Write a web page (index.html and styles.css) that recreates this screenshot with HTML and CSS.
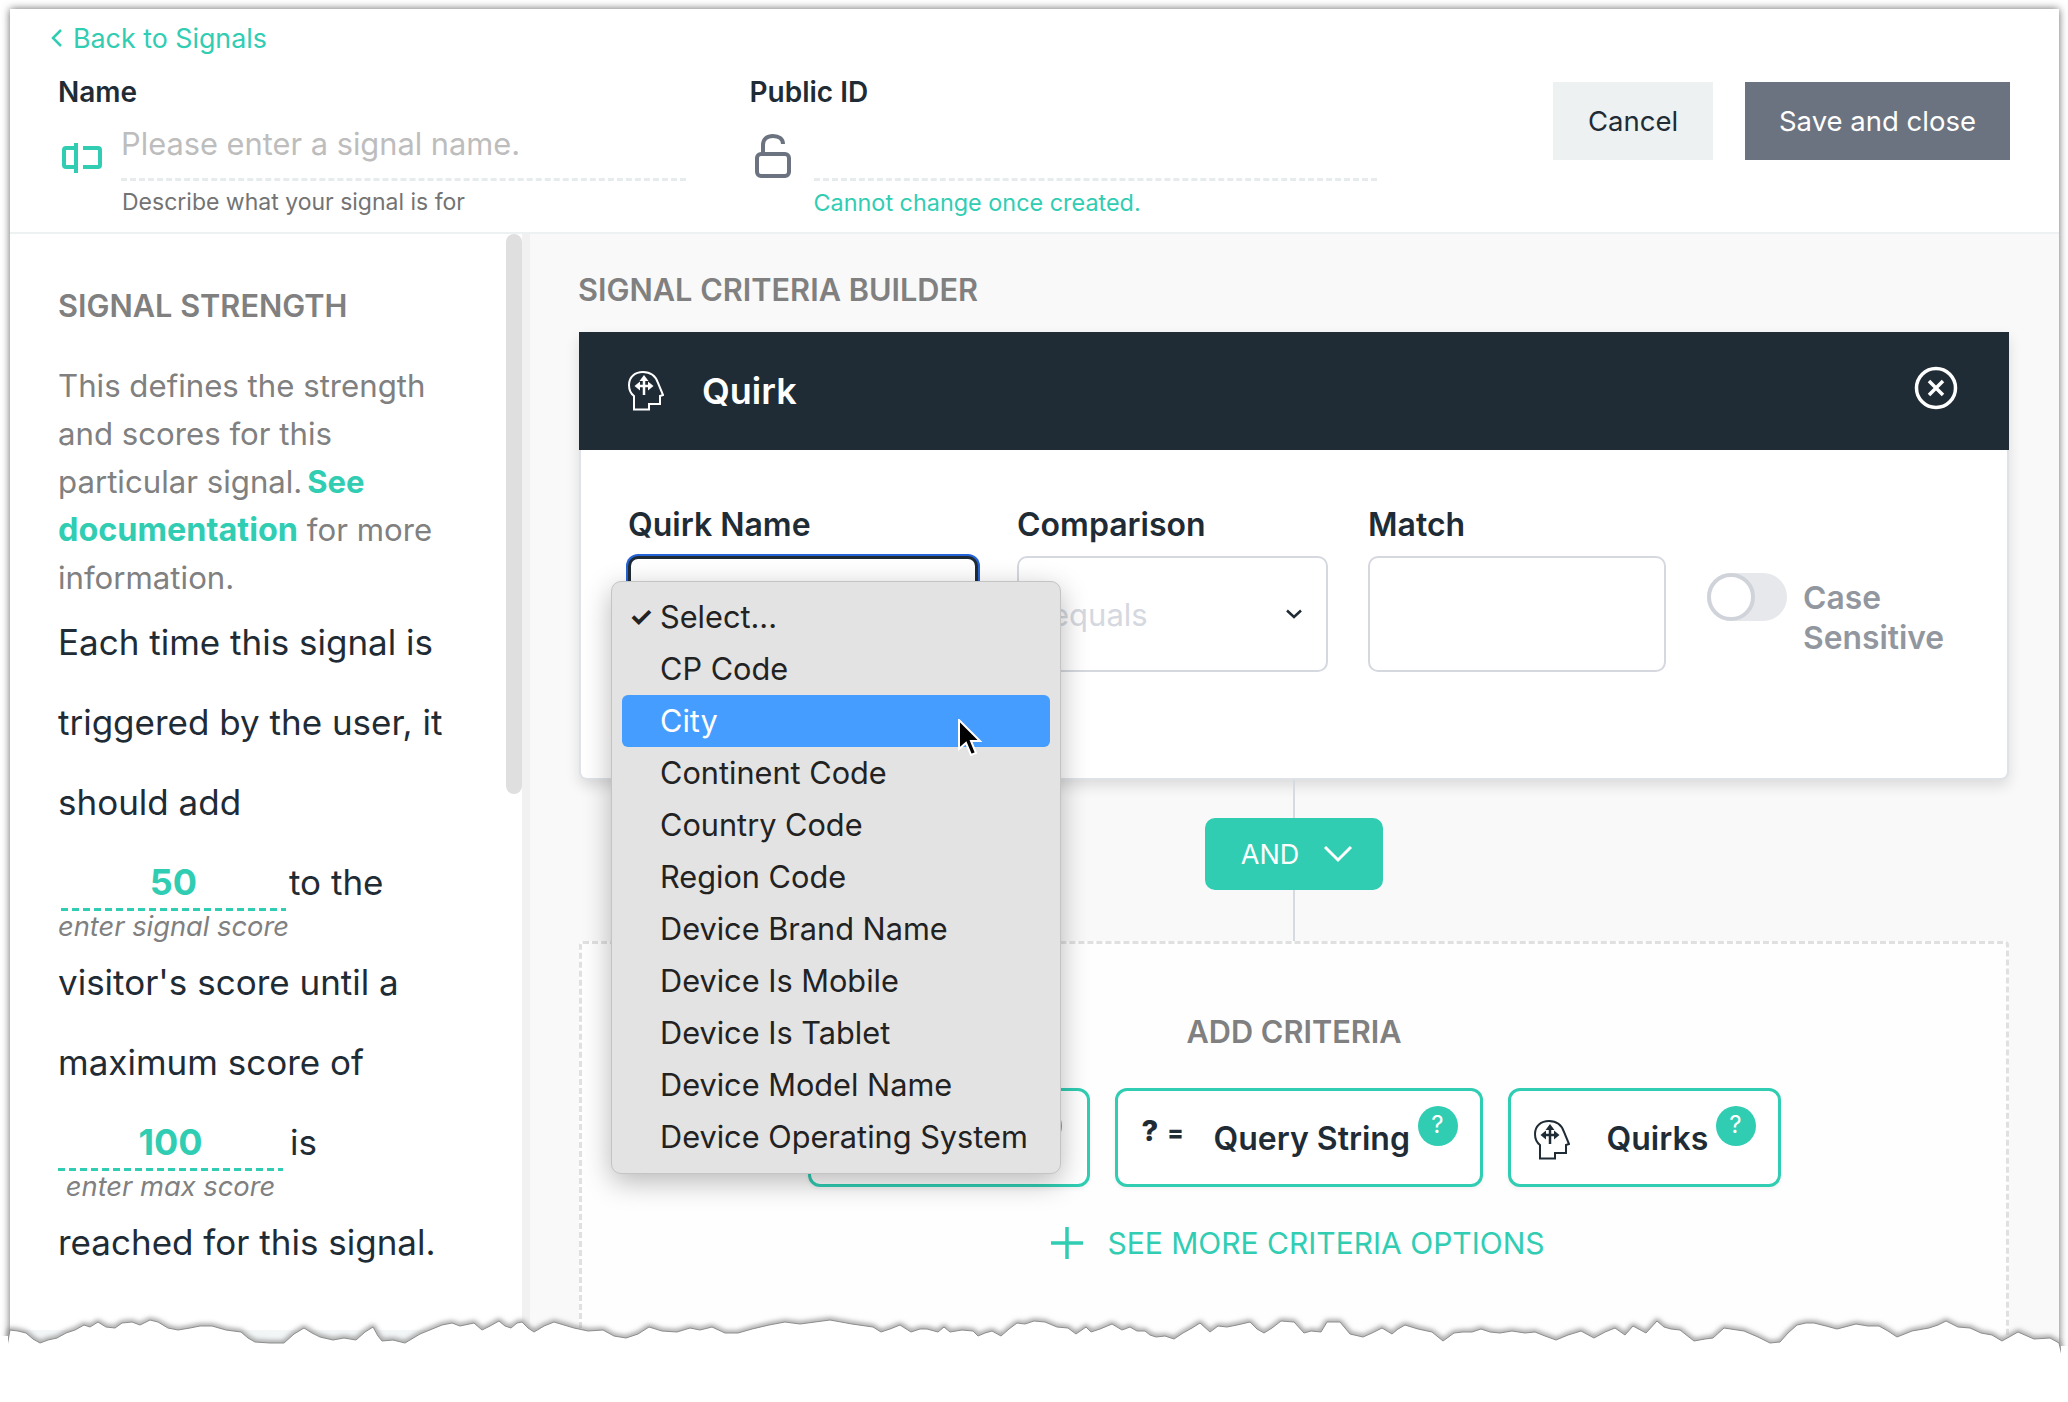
FILE: index.html
```html
<!DOCTYPE html>
<html lang="en">
<head>
    <meta charset="UTF-8" />
    <title>Signal editor</title>
    <link rel="stylesheet" href="styles.css">
</head>
<body>

    <svg class="defs" width="0" height="0">
        <symbol id="head" viewBox="0 0 36 40">
            <path d="M6 38.500V25C2 22 1 18 1 14 1 6 7 1 15 1c8 0 13 5 15 11l5 12-3 1v8H21v5.500z" fill="none" stroke="currentColor" stroke-width="2" />
            <path d="M16 9v15M11 15h10" fill="none" stroke="currentColor" stroke-width="2.500" />
            <path d="M16 4l4.500 6h-9zM6.500 15l5.500-4.500v9zM25.500 15 20 10.500v9z" fill="currentColor" />
        </symbol>
    </svg>

    <div class="window">
        <header class="top">
            <a class="back"><svg width="12" height="20" viewBox="0 0 12 20"><path d="M10 2 2 10l8 8" fill="none" stroke="#30cdb3" stroke-width="2.500" /></svg>Back to Signals</a>
            <div class="top-row">
                <div class="top-field">
                    <label class="top-label">Name</label>
                    <div class="top-input">
                        <svg class="name-icon" width="40" height="32" viewBox="0 0 40 32"><path d="M14 1v30M14 6H4a2 2 0 0 0-2 2v15a2 2 0 0 0 2 2h10M21 6h15a2 2 0 0 1 2 2v15a2 2 0 0 1-2 2H21" fill="none" stroke="#30cdb3" stroke-width="4" /></svg>
                        <div class="line-input placeholder">Please enter a signal name.</div>
                    </div>
                    <div class="hint">Describe what your signal is for</div>
                </div>
                <div class="top-field">
                    <label class="top-label">Public ID</label>
                    <div class="top-input">
                        <svg class="lock-icon" width="38" height="44" viewBox="0 0 38 44"><path d="M9 20V11C9 5 13 2 19 2s10 3 10 8" fill="none" stroke="#6c7380" stroke-width="4" /><rect x="3" y="20" width="32" height="22" rx="4" fill="none" stroke="#6c7380" stroke-width="4" /></svg>
                        <div class="line-input"></div>
                    </div>
                    <div class="hint hint-teal">Cannot change once created.</div>
                </div>
                <div class="top-buttons">
                    <button class="btn btn-cancel">Cancel</button>
                    <button class="btn btn-save">Save and close</button>
                </div>
            </div>
        </header>

        <div class="content">
            <aside class="side">
                <h2 class="side-title">SIGNAL STRENGTH</h2>
                <p class="side-intro">This defines the strength and scores for this particular signal. <a class="doc-link doc-see">See</a> <a class="doc-link">documentation</a> for more information.</p>
                <div class="side-line">Each time this signal is</div>
                <div class="side-line">triggered by the user, it</div>
                <div class="side-line">should add</div>
                <div class="score-row">
                    <div class="score score-one">
                        <div class="score-value">50</div>
                        <div class="score-label">enter signal score</div>
                    </div>
                    <span class="side-line">to the</span>
                </div>
                <div class="side-line">visitor's score until a</div>
                <div class="side-line">maximum score of</div>
                <div class="score-row">
                    <div class="score">
                        <div class="score-value">100</div>
                        <div class="score-label">enter max score</div>
                    </div>
                    <span class="side-line score-is">is</span>
                </div>
                <div class="side-line">reached for this signal.</div>
                <div class="scroll-thumb"></div>
            </aside>

            <main class="builder">
                <h2 class="builder-title">SIGNAL CRITERIA BUILDER</h2>
                <section class="panel">
                    <div class="panel-head">
                        <svg class="panel-icon" width="36" height="40"><use href="#head" /></svg>
                        <span class="panel-name">Quirk</span>
                        <svg class="panel-close" width="44" height="44" viewBox="0 0 44 44"><circle cx="22" cy="22" r="19.500" fill="none" stroke="#fff" stroke-width="3.500" /><path d="M15 15l14 14M29 15 15 29" stroke="#fff" stroke-width="3.500" /></svg>
                    </div>
                    <div class="panel-body">
                        <div class="field field-quirk">
                            <label>Quirk Name</label>
                            <div class="box box-focus"></div>
                        </div>
                        <div class="field field-comp">
                            <label>Comparison</label>
                            <div class="box box-select">
                                <span>equals</span>
                                <svg width="18" height="10" viewBox="0 0 18 10"><path d="M2 1.500 9 8l7-6.500" fill="none" stroke="#1f2c36" stroke-width="2.500" /></svg>
                            </div>
                        </div>
                        <div class="field field-match">
                            <label>Match</label>
                            <div class="box"></div>
                        </div>
                        <div class="case">
                            <div class="toggle"><div class="knob"></div></div>
                            <div class="case-label">Case<br>Sensitive</div>
                        </div>
                    </div>
                </section>

                <div class="connector">
                    <button class="and-btn">AND<svg width="30" height="18" viewBox="0 0 30 18"><path d="M2 2l13 13L28 2" fill="none" stroke="#fff" stroke-width="3" /></svg></button>
                </div>

                <section class="add-box">
                    <h3 class="add-title">ADD CRITERIA</h3>
                    <div class="cards">
                        <div class="card card-hidden"><span class="help">?</span></div>
                        <div class="card card-query">
                            <span class="query-icon">?<span class="query-eq">=</span></span>
                            <span class="card-name">Query String</span>
                            <span class="help">?</span>
                        </div>
                        <div class="card card-quirks">
                            <svg class="quirks-icon" width="36" height="40"><use href="#head" /></svg>
                            <span class="card-name">Quirks</span>
                            <span class="help">?</span>
                        </div>
                    </div>
                    <a class="see-more"><svg width="32" height="32" viewBox="0 0 32 32"><path d="M16 0v32M0 16h32" stroke="#30cdb3" stroke-width="3.500" /></svg>SEE MORE CRITERIA OPTIONS</a>
                </section>
            </main>
        </div>

        <!-- native select popup -->
        <ul class="menu">
            <li class="checked">Select...</li>
            <li>CP Code</li>
            <li class="active">City</li>
            <li>Continent Code</li>
            <li>Country Code</li>
            <li>Region Code</li>
            <li>Device Brand Name</li>
            <li>Device Is Mobile</li>
            <li>Device Is Tablet</li>
            <li>Device Model Name</li>
            <li>Device Operating System</li>
        </ul>
        <svg class="cursor" width="26" height="38" viewBox="0 0 26 38"><path d="M2 1v29l7-6 5 12 5-2-5-12h9z" fill="#000" stroke="#fff" stroke-width="2" /></svg>
    </div>

    <!-- torn bottom edge -->
    <svg class="torn" width="2068" height="102" viewBox="0 1300 2068 102">
        <defs>
            <filter id="blur" x="-1%" y="-50%" width="102%" height="200%"><feGaussianBlur stdDeviation="2.500" /></filter>
            <polygon id="edge" points="-20,1420 -20,1352 6,1352 10,1330 18,1331 26,1333 33,1339 40,1343 48,1340 57,1338 66,1333 75,1330 84,1325 90,1327 98,1322 106,1327 115,1328 122,1323 132,1322 140,1325 150,1320 158,1322 168,1328 178,1330 190,1328 200,1326 212,1326 226,1330 241,1332 248,1338 255,1342 270,1343 284,1343 294,1334 304,1328 312,1333 320,1337 333,1340 344,1338 356,1340 365,1332 373,1327 378,1336 382,1341 393,1340 405,1343 420,1334 442,1325 452,1323 460,1326 474,1323 482,1330 490,1326 499,1321 505,1326 511,1328 517,1323 522,1322 528,1328 534,1332 544,1326 554,1322 564,1325 574,1328 588,1331 603,1330 614,1336 626,1338 638,1334 649,1327 662,1331 677,1332 690,1328 700,1330 712,1327 725,1333 738,1333 752,1329 769,1325 785,1322 800,1324 815,1322 830,1320 852,1324 873,1327 881,1332 890,1329 900,1325 911,1332 920,1329 927,1329 938,1332 944,1327 950,1332 962,1330 973,1331 978,1336 985,1333 992,1331 1001,1336 1009,1329 1017,1323 1025,1324 1034,1321 1045,1322 1057,1327 1068,1328 1076,1334 1086,1327 1091,1332 1100,1329 1112,1324 1122,1330 1130,1327 1137,1331 1145,1331 1150,1335 1156,1337 1165,1336 1174,1339 1183,1333 1192,1328 1200,1323 1210,1332 1218,1326 1227,1327 1237,1325 1250,1322 1257,1329 1264,1333 1272,1328 1281,1321 1294,1322 1304,1333 1311,1331 1321,1332 1327,1322 1340,1322 1350,1334 1363,1337 1372,1333 1382,1328 1392,1334 1398,1329 1405,1325 1418,1329 1432,1332 1443,1341 1454,1333 1463,1332 1472,1332 1481,1329 1490,1332 1500,1333 1512,1331 1525,1333 1535,1332 1545,1336 1556,1340 1568,1335 1581,1331 1594,1338 1605,1332 1615,1328 1625,1335 1633,1326 1646,1333 1657,1321 1664,1327 1671,1329 1680,1330 1694,1341 1705,1339 1713,1338 1724,1328 1744,1331 1758,1337 1770,1343 1780,1342 1788,1333 1797,1325 1806,1323 1814,1323 1826,1326 1837,1329 1856,1324 1868,1326 1879,1326 1888,1331 1897,1337 1912,1331 1929,1328 1938,1325 1946,1321 1958,1327 1970,1328 1981,1333 1992,1335 2002,1341 2018,1332 2034,1339 2050,1338 2059,1343 2063,1360 2090,1360 2090,1420" />
        </defs>
        <use href="#edge" class="torn-shadow" filter="url(#blur)" />
        <use href="#edge" class="torn-paper" />
        <rect class="torn-side" x="0" y="1336" width="8" height="66" />
        <rect class="torn-side" x="2061" y="1346" width="7" height="56" />
    </svg>

</body>
</html>
```

FILE: styles.css
```css
* {
    box-sizing: border-box;
}
body {
    margin: 0;
    height: 1402px;
    overflow: hidden;
    position: relative;
    background-color: #fff;
    font-family: "Inter", sans-serif;
    color: #1f2c36;
}
.defs {
    position: absolute;
}
.window {
    position: relative;
    margin: 9px 0 0 10px;
    width: 2049px;
    height: 1340px;
    background-color: #fff;
    box-shadow: 0 0 8px rgba(0,0,0,0.6);
    overflow: hidden;
}

/* top bar */
.top {
    height: 225px;
    padding: 12px 49px 0;
    border-bottom: 2px solid #edf1f1;
}
.back {
    display: flex;
    align-items: center;
    gap: 10px;
    margin-left: -8px;
    height: 34px;
    color: #30cdb3;
    font-size: 26.800px;
}
.top-row {
    display: flex;
    gap: 65px;
}
.top-field {
    width: 627px;
    padding-top: 20px;
}
.top-label {
    display: block;
    height: 34px;
    margin-left: -1px;
    line-height: 34px;
    font-size: 28px;
    font-weight: 600;
}
.top-input {
    display: flex;
    height: 72px;
    align-items: flex-end;
}
.name-icon {
    margin: 0 19px 7px 3px;
    flex: none;
}
.lock-icon {
    margin: 0 22px 3px 3px;
    flex: none;
}
.line-input {
    flex: 1;
    height: 56px;
    line-height: 38px;
    border-bottom: 3px dashed #e6ecec;
    font-size: 30.800px;
}
.placeholder {
    color: #bdbdbd;
}
.hint {
    margin-left: 63px;
    height: 41px;
    line-height: 43px;
    font-size: 23px;
    color: #737373;
}
.hint-teal {
    color: #30cdb3;
    font-size: 23.400px;
}
.top-buttons {
    display: flex;
    gap: 32px;
    margin: 27px 0 0 111px;
}
.btn {
    height: 78px;
    border: none;
    font-family: inherit;
    font-size: 27.500px;
}
.btn-cancel {
    width: 160px;
    background-color: #edf1f1;
    color: #1f2c36;
}
.btn-save {
    width: 265px;
    background-color: #6c7380;
    color: #fff;
}

/* sidebar */
.content {
    display: flex;
    height: 1115px;
}
.side {
    position: relative;
    flex: none;
    width: 520px;
    padding: 0 48px;
    background: linear-gradient(#fff 1096px, #f3f6f7 0);
    border-right: 8px solid #f1f1f1;
}
.side-title {
    margin: 52px 0 36px;
    height: 40px;
    line-height: 40px;
    font-size: 30.700px;
    font-weight: 600;
    color: #808080;
}
.side-intro {
    margin: 0;
    width: 410px;
    line-height: 48px;
    font-size: 31.200px;
    color: #808080;
}
.doc-link {
    color: #30cdb3;
    font-weight: 700;
    font-size: 32.400px;
}
.doc-see {
    margin-left: -4px;
    font-size: 31px;
}
.side-line {
    display: block;
    line-height: 80px;
    font-size: 35px;
    white-space: nowrap;
}
.score-row {
    display: flex;
    height: 100px;
    gap: 3px;
}
.score {
    width: 225px;
}
.score-one {
    margin-left: 3px;
}
.score-is {
    margin-left: 4px;
}
.score-value {
    height: 69px;
    padding-top: 20px;
    background: repeating-linear-gradient(90deg, #30cdb3 0 7px, transparent 7px 11px) bottom / 100% 3px no-repeat;
    text-align: center;
    line-height: 40px;
    font-size: 36px;
    font-weight: 700;
    color: #30cdb3;
}
.score-label {
    margin: 0 -5px;
    line-height: 32px;
    text-align: center;
    font-size: 27.300px;
    font-style: italic;
    color: #808080;
    white-space: nowrap;
}
.scroll-thumb {
    position: absolute;
    top: 0;
    right: 0;
    width: 16px;
    height: 560px;
    border-radius: 8px;
    background-color: #dfdfdf;
}

/* builder */
.builder {
    flex: 1;
    padding: 36px 50px 0 49px;
    background-color: #f9f9f9;
}
.builder-title {
    margin: 0 0 22px -1px;
    height: 40px;
    line-height: 40px;
    font-size: 30.700px;
    font-weight: 600;
    color: #808080;
}
.panel {
    height: 448px;
    background-color: #fff;
    border-radius: 0 0 8px 8px;
    border: 2px solid #dfe3e7;
    border-top: none;
    box-shadow: 0 6px 14px rgba(0,0,0,0.12);
}
.panel-head {
    display: flex;
    align-items: center;
    height: 118px;
    margin: 0 -2px;
    padding: 0 51px 6px 49px;
    background-color: #1f2c36;
    color: #fff;
}
.panel-icon {
    margin-top: 6px;
}
.panel-name {
    margin: 6px 0 0 38px;
    font-size: 36px;
    font-weight: 600;
}
.panel-close {
    margin-left: auto;
}
.panel-body {
    display: flex;
    padding: 53px 0 0 47px;
}
.field label {
    display: block;
    height: 42px;
    line-height: 44px;
    font-size: 32px;
    font-weight: 600;
}
.field-quirk {
    width: 389px;
}
.field-comp {
    width: 351px;
}
.field-match {
    width: 298px;
}
.box {
    height: 116px;
    margin-top: 11px;
    border: 2px solid #d5d8df;
    border-radius: 10px;
    background-color: #fff;
}
.field-quirk .box {
    width: 350px;
}
.field-comp .box {
    width: 311px;
}
.box-focus {
    border: 3px solid #1f2c36;
    box-shadow: 0 0 0 2px #2563d8;
}
.box-select {
    display: flex;
    align-items: center;
    justify-content: space-between;
    padding: 0 23px 0 32px;
    font-size: 31px;
    color: #d5d8df;
}
.case {
    display: flex;
    margin: 70px 0 0 41px;
    gap: 16px;
}
.toggle {
    width: 80px;
    height: 48px;
    border-radius: 24px;
    background-color: #e7e8ec;
}
.knob {
    width: 48px;
    height: 48px;
    border: 4px solid #d0d4da;
    border-radius: 50%;
    background-color: #fff;
}
.case-label {
    line-height: 40px;
    margin-top: 5px;
    font-size: 31.800px;
    font-weight: 600;
    color: #92979f;
}

.connector {
    display: flex;
    justify-content: center;
    align-items: center;
    height: 161px;
    padding-bottom: 13px;
    background: linear-gradient(#d5dbe0, #d5dbe0) center / 2px 100% no-repeat;
}
.and-btn {
    display: flex;
    align-items: center;
    justify-content: center;
    gap: 24px;
    width: 178px;
    height: 72px;
    padding-left: 12px;
    border: none;
    border-radius: 10px;
    background-color: #30cdb3;
    color: #fff;
    font-family: inherit;
    font-size: 27px;
}
.add-box {
    height: 500px;
    border: 3px dashed #e0e0e0;
    border-radius: 4px;
    background-color: #fefefe;
    text-align: center;
}
.add-title {
    margin: 68px 0 36px;
    height: 40px;
    line-height: 40px;
    font-size: 30.700px;
    font-weight: 600;
    color: #808080;
}
.cards {
    display: flex;
    justify-content: center;
    gap: 25px;
}
.card {
    position: relative;
    display: flex;
    height: 99px;
    border: 3px solid #30cdb3;
    border-radius: 12px;
    background-color: #fff;
    box-shadow: 0 2px 4px rgba(0,0,0,0.05);
}
.card-hidden {
    width: 282px;
}
.card-query {
    width: 368px;
}
.card-quirks {
    width: 273px;
}
.card-name {
    position: absolute;
    top: 28px;
    line-height: 40px;
    font-size: 32px;
    font-weight: 600;
    white-space: nowrap;
}
.card-query .card-name {
    left: 96px;
}
.card-quirks .card-name {
    left: 96px;
}
.query-icon {
    position: absolute;
    top: 24px;
    left: 24px;
    font-size: 29px;
    font-weight: 800;
    line-height: 32px;
}
.query-eq {
    margin-left: 9px;
    font-size: 24px;
}
.quirks-icon {
    position: absolute;
    left: 23px;
    top: 29px;
}
.help {
    position: absolute;
    top: 15px;
    right: 22px;
    width: 40px;
    height: 40px;
    border-radius: 50%;
    background-color: #30cdb3;
    color: #fff;
    line-height: 38px;
    font-size: 24px;
    text-align: center;
}
.card-hidden .help {
    right: 25px;
}
.see-more {
    display: flex;
    justify-content: center;
    align-items: center;
    gap: 24px;
    margin-top: 40px;
    padding-left: 8px;
    line-height: 32px;
    color: #30cdb3;
    font-size: 30px;
}

/* popup */
.menu {
    position: absolute;
    left: 601px;
    top: 572px;
    width: 450px;
    height: 593px;
    margin: 0;
    padding: 9px 10px;
    list-style: none;
    background-color: #e3e3e3;
    border: 1px solid #c4c4c4;
    border-radius: 10px;
    box-shadow: 0 8px 28px rgba(0,0,0,0.28);
    font-size: 30.700px;
    color: #222;
}
.menu li {
    height: 52px;
    line-height: 52px;
    padding-left: 38px;
    border-radius: 6px;
    white-space: nowrap;
    position: relative;
}
.menu li.checked::before {
    content: "✓";
    position: absolute;
    left: 7px;
    font-size: 27px;
    font-weight: 700;
}
.menu li.active {
    background-color: #459dff;
    color: #fff;
}
.cursor {
    position: absolute;
    left: 947px;
    top: 710px;
}

.torn {
    position: absolute;
    left: 0;
    top: 1300px;
}
.torn-paper {
    fill: #fff;
    stroke: #8d8d8d;
    stroke-width: 1;
}
.torn-shadow {
    fill: none;
    stroke: #8a8a8a;
    stroke-width: 4;
}
.torn-side {
    fill: #fff;
}
```
